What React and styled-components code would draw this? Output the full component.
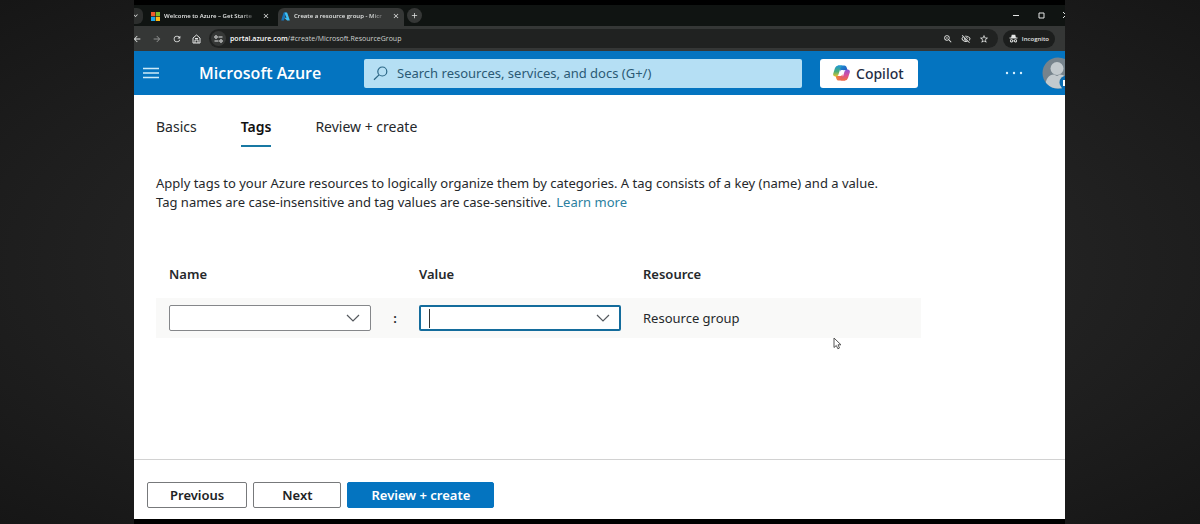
import React from 'react';
import styled, { createGlobalStyle, css } from 'styled-components';
import {
	MdArrowBack,
	MdArrowForward,
	MdRefresh,
	MdOutlineZoomIn,
	MdOutlineVisibilityOff,
	MdStarBorder,
	MdClose,
	MdAdd,
	MdKeyboardArrowDown,
} from 'react-icons/md';

const MicrosoftLogo = () => (
	<svg width='9' height='9' viewBox='0 0 9 9' aria-hidden='true'>
		<rect width='4.2' height='4.2' fill='#f0582a' />
		<rect x='4.8' width='4.2' height='4.2' fill='#7fba2a' />
		<rect y='4.8' width='4.2' height='4.2' fill='#1ba4ea' />
		<rect x='4.8' y='4.8' width='4.2' height='4.2' fill='#fdb913' />
	</svg>
);

const AzureLogo = () => (
	<svg width='9' height='9' viewBox='0 0 18 18' aria-hidden='true'>
		<path d='M6 1h5L6 16.5q-.3.7-1 .7H1.300q-1-.2-.7-1.200L5 1.700Q5.300 1 6 1z' fill='#1673b8' />
		<path d='M7 1h4.400q.8 0 1 .7L17.400 16q.2 1-.8 1.200h-4.400L6.500 11.600H11z' fill='#3fc0f5' />
	</svg>
);

const HomeIcon = () => (
	<svg width='9' height='10' viewBox='0 0 18 20' fill='none' stroke='currentColor' strokeWidth='2' aria-hidden='true'>
		<path d='M2 8l7-6 7 6v10H2z' />
		<path d='M6 18v-6h6v6M6 9h6' />
	</svg>
);

const SiteSettingsIcon = () => (
	<svg width='9' height='8' viewBox='0 0 18 16' fill='none' stroke='currentColor' strokeWidth='2' aria-hidden='true'>
		<circle cx='4' cy='4' r='2.500' />
		<path d='M9 4h8M1 12h8' />
		<circle cx='14' cy='12' r='2.500' />
	</svg>
);

const IncognitoIcon = () => (
	<svg width='9' height='9' viewBox='0 0 18 18' fill='currentColor' aria-hidden='true'>
		<path d='M5.500 1.500h7l1.300 5.500H17v2H1V7h3.200z' />
		<path
			d='M5 10.500a3.200 3.200 0 0 1 3.100 2.400h1.800a3.200 3.200 0 1 1 0 1.600H8.100A3.200 3.200 0 1 1 5 10.500zm0 1.700a1.500 1.500 0 1 0 0 3 1.500 1.500 0 0 0 0-3zm8 0a1.500 1.500 0 1 0 0 3 1.500 1.500 0 0 0 0-3z'
			fillRule='evenodd'
		/>
	</svg>
);

const MenuIcon = () => (
	<svg width='16' height='12' viewBox='0 0 16 12' stroke='#cdeaf8' strokeWidth='1.300' aria-hidden='true'>
		<path d='M0 1.500h16M0 6h16M0 10.500h16' />
	</svg>
);

const SearchIcon = () => (
	<svg width='15' height='15' viewBox='0 0 15 15' fill='none' stroke='#2b6685' strokeWidth='1.200' aria-hidden='true'>
		<circle cx='9.300' cy='5.500' r='4.500' />
		<path d='M6 8.900L1 13.800' />
	</svg>
);

const CopilotLogo = () => (
	<svg width='17' height='16' viewBox='0 0 34 32' aria-hidden='true'>
		<defs>
			<linearGradient id='cp-top' x1='0' y1='0' x2='1' y2='1'>
				<stop offset='0' stopColor='#1d9bd8' />
				<stop offset='1' stopColor='#2248b8' />
			</linearGradient>
			<linearGradient id='cp-left' x1='0' y1='0' x2='0' y2='1'>
				<stop offset='0' stopColor='#1f98d4' />
				<stop offset='.55' stopColor='#49ad78' />
				<stop offset='1' stopColor='#e5c62f' />
			</linearGradient>
			<linearGradient id='cp-right' x1='0' y1='0' x2='0' y2='1'>
				<stop offset='0' stopColor='#8a56d8' />
				<stop offset='.5' stopColor='#d94f9b' />
				<stop offset='1' stopColor='#f0713c' />
			</linearGradient>
			<linearGradient id='cp-bottom' x1='0' y1='0' x2='1' y2='0'>
				<stop offset='0' stopColor='#f08a35' />
				<stop offset='1' stopColor='#e2467c' />
			</linearGradient>
		</defs>
		<path d='M9 1h14q3 0 4 3l2 6h-5q-4 0-5 3l-2 5L13 5z' fill='url(#cp-top)' />
		<path d='M25 31H11q-3 0-4-3l-2-6h5q4 0 5-3l2-5 4 13z' fill='url(#cp-bottom)' />
		<path d='M11 1h8q-3 1-4 5l-4 13q-1 4-6 4-6 0-4.500-6L4 6q1.500-5 7-5z' fill='url(#cp-left)' />
		<path d='M23 31h-8q3-1 4-5l4-13q1-4 6-4 6 0 4.500 6L30 26q-1.500 5-7 5z' fill='url(#cp-right)' />
		<path d='M17 10h5q-1 1-1.500 3l-2.500 7q-.8 2-3 2h-4q1-1 1.500-3l2.500-7q.7-2 2-2z' fill='#fff' />
	</svg>
);

const AvatarImage = () => (
	<svg width='32' height='32' viewBox='0 0 32 32' aria-hidden='true'>
		<defs>
			<clipPath id='avatar-clip'>
				<circle cx='16' cy='16' r='15.500' />
			</clipPath>
		</defs>
		<g clipPath='url(#avatar-clip)'>
			<rect width='32' height='32' fill='#76838c' />
			<circle cx='15' cy='11.500' r='6.500' fill='#c3cace' />
			<path d='M3 32q0-14 9-14.500l3 1.500 3-1.500q9 .5 9 14.500z' fill='#c3cace' />
		</g>
		<circle cx='24.500' cy='25.500' r='7' fill='#0a6cb0' />
		<rect x='21' y='23' width='7' height='6' fill='#fff' />
	</svg>
);

const ChevronIcon = () => (
	<svg width='14' height='8' viewBox='0 0 14 8' fill='none' stroke='#55595e' strokeWidth='1.200' aria-hidden='true'>
		<path d='M1 1l6 6 6-6' />
	</svg>
);

const PointerIcon = () => (
	<svg width='9' height='13' viewBox='0 0 9 13' aria-hidden='true'>
		<path d='M1 1v9.500l2.300-2 1.600 3.300 1.600-.8L5 7.800h3z' fill='#fff' stroke='#555' />
	</svg>
);

const ComboBox = ({ label, active }) => (
	<Combo $active={active}>
		{active && <Caret />}
		<ComboInput type='text' aria-label={label} />
		<PlainButton type='button' aria-label={`Show ${label} options`}>
			<ChevronIcon />
		</PlainButton>
	</Combo>
);

const App = () => {
	return (
		<Stage>
			<GlobalStyle />
			<Screen>
				<TabStrip>
					<TabSearch type='button' aria-label='Search tabs'>
						<MdKeyboardArrowDown size={9} />
					</TabSearch>
					<BrowserTab>
						<MicrosoftLogo />
						<TabTitle>Welcome to Azure – Get Starte</TabTitle>
						<PlainButton type='button' aria-label='Close tab'>
							<MdClose size={8} />
						</PlainButton>
					</BrowserTab>
					<BrowserTab $active>
						<AzureLogo />
						<TabTitle>Create a resource group - Micr</TabTitle>
						<PlainButton type='button' aria-label='Close tab'>
							<MdClose size={8} />
						</PlainButton>
					</BrowserTab>
					<NewTab type='button' aria-label='New tab'>
						<MdAdd size={9} />
					</NewTab>
					<WindowControls>
						<PlainButton type='button' aria-label='Minimize'>
							<svg width='7' height='7' stroke='currentColor'><path d='M0 3.500h6' /></svg>
						</PlainButton>
						<PlainButton type='button' aria-label='Maximize'>
							<svg width='7' height='7' fill='none' stroke='currentColor'><path d='M1 1h5v5H1z' /></svg>
						</PlainButton>
						<PlainButton type='button' aria-label='Close window'>
							<svg width='7' height='7' stroke='currentColor'><path d='M0 0l6 6M6 0L0 6' /></svg>
						</PlainButton>
					</WindowControls>
				</TabStrip>

				<AddressRow>
					<NavButtons>
						<PlainButton type='button' aria-label='Back'><MdArrowBack size={10} /></PlainButton>
						<PlainButton type='button' aria-label='Forward' disabled><MdArrowForward size={10} /></PlainButton>
						<PlainButton type='button' aria-label='Reload'><MdRefresh size={10} /></PlainButton>
						<PlainButton type='button' aria-label='Home'><HomeIcon /></PlainButton>
					</NavButtons>
					<AddressBar>
						<SiteButton type='button' aria-label='Site settings'><SiteSettingsIcon /></SiteButton>
						<Url><b>portal.azure.com</b>/#create/Microsoft.ResourceGroup</Url>
						<PlainButton type='button' aria-label='Zoom'><MdOutlineZoomIn size={10} /></PlainButton>
						<PlainButton type='button' aria-label='Cookies blocked'><MdOutlineVisibilityOff size={10} /></PlainButton>
						<PlainButton type='button' aria-label='Bookmark'><MdStarBorder size={10} /></PlainButton>
					</AddressBar>
					<Incognito>
						<IncognitoIcon />
						Incognito
					</Incognito>
				</AddressRow>

				<PortalHeader>
					<PlainButton type='button' aria-label='Show portal menu'><MenuIcon /></PlainButton>
					<Brand href='#'>Microsoft Azure</Brand>
					<SearchBox>
						<SearchIcon />
						<input
							type='search'
							aria-label='Search resources, services, and docs'
							placeholder='Search resources, services, and docs (G+/)'
						/>
					</SearchBox>
					<CopilotButton type='button'>
						<CopilotLogo />
						Copilot
					</CopilotButton>
					<AccountArea>
						<PlainButton type='button' aria-label='More'>
							<svg width='18' height='4' fill='#d6efff'>
								<circle cx='2' cy='2' r='1.200' />
								<circle cx='9' cy='2' r='1.200' />
								<circle cx='16' cy='2' r='1.200' />
							</svg>
						</PlainButton>
						<PlainButton type='button' aria-label='Account'><AvatarImage /></PlainButton>
					</AccountArea>
				</PortalHeader>

				<Content>
					<Steps>
						<Step href='#'>Basics</Step>
						<Step href='#' $active aria-current='step'>Tags</Step>
						<Step href='#'>Review + create</Step>
					</Steps>
					<Intro>
						Apply tags to your Azure resources to logically organize them by categories. A tag consists of a key (name) and a value.
						<br />
						Tag names are case-insensitive and tag values are case-sensitive. <a href='#'>Learn more</a>
					</Intro>
					<TagTable>
						<thead>
							<tr>
								<NameHead>Name</NameHead>
								<ColonHead />
								<ValueHead>Value</ValueHead>
								<th>Resource</th>
							</tr>
						</thead>
						<tbody>
							<tr>
								<NameCell><ComboBox label='Name' /></NameCell>
								<ColonCell>:</ColonCell>
								<ValueCell><ComboBox label='Value' active /></ValueCell>
								<td>Resource group</td>
							</tr>
						</tbody>
					</TagTable>
				</Content>

				<Footer>
					<Button type='button'>Previous</Button>
					<Button type='button'>Next</Button>
					<Button type='button' $primary>Review + create</Button>
				</Footer>
				<Pointer><PointerIcon /></Pointer>
			</Screen>
		</Stage>
	);
};

//////////////////////////////////////////////////
//				 Styling
//////////////////////////////////////////////////

const GlobalStyle = createGlobalStyle`
	* {
		box-sizing: border-box;
	}
	body {
		margin: 0;
		font-family: 'Noto Sans', 'Open Sans', sans-serif;
		font-size: 13px;
		color: #25282b;
	}
	button, input {
		font: inherit;
		color: inherit;
	}
	svg {
		display: block;
		flex-shrink: 0;
	}
`;

const Stage = styled.div`
	min-height: 100vh;
	display: flex;
	padding: 0 135px 0 134px;
	background: radial-gradient(ellipse at center, #292929 0%, #232323 50%, #161616 100%);
`;

const Screen = styled.main`
	position: relative;
	flex: 1;
	min-width: 0;
	display: flex;
	flex-direction: column;
	overflow: hidden;
	background: white;
	border-top: 5px solid black;
	border-bottom: 5px solid black;
`;

const PlainButton = styled.button`
	display: flex;
	align-items: center;
	justify-content: center;
	padding: 0;
	border: none;
	background: none;
	cursor: pointer;
	&:disabled {
		opacity: 0.5;
	}
`;

const TabStrip = styled.div`
	height: 21px;
	display: flex;
	align-items: center;
	background: #101412;
	color: #e4e6e5;
	font-family: 'Open Sans', sans-serif;
	font-size: 6px;
	font-weight: 600;
`;

const TabSearch = styled(PlainButton)`
	width: 16px;
	height: 16px;
	margin-left: -7px;
	border-radius: 6px;
	background: #2c2e2d;
`;

const BrowserTab = styled.div`
	width: 126px;
	height: 18px;
	margin-top: 3px;
	margin-left: 5px;
	padding: 0 4px 2px 3px;
	display: flex;
	align-items: center;
	gap: 4px;
	border-radius: 6px 6px 0 0;
	& + & {
		margin-left: 4px;
	}
	${({ $active }) => $active && css`
		background: #353736;
	`}
`;

const TabTitle = styled.span`
	flex: 1;
	min-width: 0;
	white-space: nowrap;
	mask-image: linear-gradient(to right, black 80%, transparent);
`;

const NewTab = styled(PlainButton)`
	width: 15px;
	height: 15px;
	margin-left: 3px;
	border-radius: 50%;
	background: #353736;
`;

const WindowControls = styled.div`
	margin-left: auto;
	margin-right: -5px;
	display: flex;
	gap: 18px;
`;

const AddressRow = styled.div`
	height: 25px;
	padding-right: 10px;
	display: flex;
	align-items: center;
	gap: 5px;
	background: #353736;
	color: #e4e6e5;
	font-family: 'Open Sans', sans-serif;
	font-size: 7px;
`;

const NavButtons = styled.div`
	margin-left: -2px;
	margin-right: 3px;
	display: flex;
	gap: 10px;
`;

const AddressBar = styled.div`
	flex: 1;
	height: 19px;
	padding: 0 9px 0 2px;
	display: flex;
	align-items: center;
	gap: 8px;
	border-radius: 10px;
	background: #202221;
`;

const SiteButton = styled(PlainButton)`
	width: 15px;
	height: 15px;
	border-radius: 50%;
	background: #353736;
`;

const Url = styled.span`
	flex: 1;
	margin-left: -4px;
	color: #ced1cf;
	b {
		font-weight: 600;
		color: white;
	}
`;

const Incognito = styled.div`
	height: 18px;
	padding: 0 6px;
	display: flex;
	align-items: center;
	gap: 4px;
	border-radius: 9px;
	background: #1c1e1d;
	font-size: 6px;
	font-weight: 600;
`;

const PortalHeader = styled.header`
	height: 44px;
	padding-left: 9px;
	display: flex;
	align-items: center;
	background: #0474c0;
`;

const Brand = styled.a`
	width: 165px;
	margin-left: 40px;
	color: white;
	font-family: 'Open Sans', sans-serif;
	font-size: 16px;
	font-weight: 600;
	text-decoration: none;
	white-space: nowrap;
`;

const SearchBox = styled.label`
	flex: 1;
	max-width: 438px;
	height: 29px;
	padding: 0 9px;
	display: flex;
	align-items: center;
	gap: 9px;
	border-radius: 2px;
	background: #b5dff4;
	input {
		flex: 1;
		min-width: 0;
		padding: 0;
		border: none;
		outline: none;
		background: none;
	}
	input::placeholder {
		color: #2b5a75;
		opacity: 1;
	}
`;

const CopilotButton = styled.button`
	height: 29px;
	margin-left: 18px;
	padding: 0 14px 0 13px;
	display: flex;
	align-items: center;
	gap: 6px;
	border: none;
	border-radius: 3px;
	background: white;
	color: #1f2d45;
	font-size: 14px;
	font-weight: 500;
`;

const AccountArea = styled.div`
	margin-left: auto;
	margin-right: -9px;
	display: flex;
	align-items: center;
	gap: 19px;
`;

const Content = styled.section`
	flex: 1;
	padding: 22px 21px 0 22px;
`;

const Steps = styled.nav`
	display: flex;
	gap: 44px;
	font-size: 14px;
`;

const Step = styled.a`
	height: 30px;
	line-height: 20px;
	color: inherit;
	text-decoration: none;
	${({ $active }) => $active && css`
		font-weight: 600;
		color: #111;
		border-bottom: 2px solid #1878a3;
	`}
`;

const Intro = styled.p`
	margin: 27px 0 0;
	line-height: 19px;
	a {
		margin-left: 2px;
		color: #2b7f9f;
		text-decoration: none;
	}
`;

const TagTable = styled.table`
	width: 100%;
	max-width: 765px;
	margin-top: 38px;
	border-collapse: collapse;
	table-layout: fixed;
	th, td {
		padding: 0;
		text-align: left;
	}
	th {
		height: 48px;
		font-weight: 600;
	}
	tbody tr {
		height: 40px;
		background: #f9f9f8;
	}
`;

const NameHead = styled.th`
	width: 215px;
	&& {
		padding-left: 13px;
	}
`;

const ColonHead = styled.td`
	width: 48px;
`;

const ValueHead = styled.th`
	width: 224px;
`;

const NameCell = styled.td`
	&& {
		padding-left: 13px;
	}
`;

const ColonCell = styled.td`
	&& {
		text-align: center;
		font-weight: 600;
	}
`;

const ValueCell = styled.td`
	&& {
		padding-right: 22px;
	}
`;

const Combo = styled.div`
	height: 26px;
	padding: 0 10px;
	display: flex;
	align-items: center;
	border: 1px solid #85878a;
	border-radius: 2px;
	background: white;
	${({ $active }) => $active && css`
		padding: 0 9px 0 8px;
		border: 2px solid #146c9c;
	`}
`;

const ComboInput = styled.input`
	flex: 1;
	min-width: 0;
	padding: 0;
	border: none;
	outline: none;
	background: none;
`;

const Caret = styled.span`
	width: 1px;
	height: 19px;
	background: #333;
`;

const Footer = styled.footer`
	height: 60px;
	padding: 22px 13px 0;
	display: flex;
	align-items: flex-start;
	gap: 6px;
	border-top: 1px solid #d2d2d2;
`;

const Button = styled.button`
	height: 26px;
	padding: 0 22px;
	border: 1px solid #77797b;
	border-radius: 2px;
	background: white;
	color: #202224;
	font-weight: 600;
	white-space: nowrap;
	&:nth-child(2) {
		padding: 0 28px;
	}
	${({ $primary }) => $primary && css`
		padding: 0 23px;
		border-color: #0474c0;
		background: #0474c0;
		color: white;
	`}
`;

/* mouse pointer, floats over the page */
const Pointer = styled.div`
	position: absolute;
	left: 699px;
	top: 332px;
`;

export default App;
